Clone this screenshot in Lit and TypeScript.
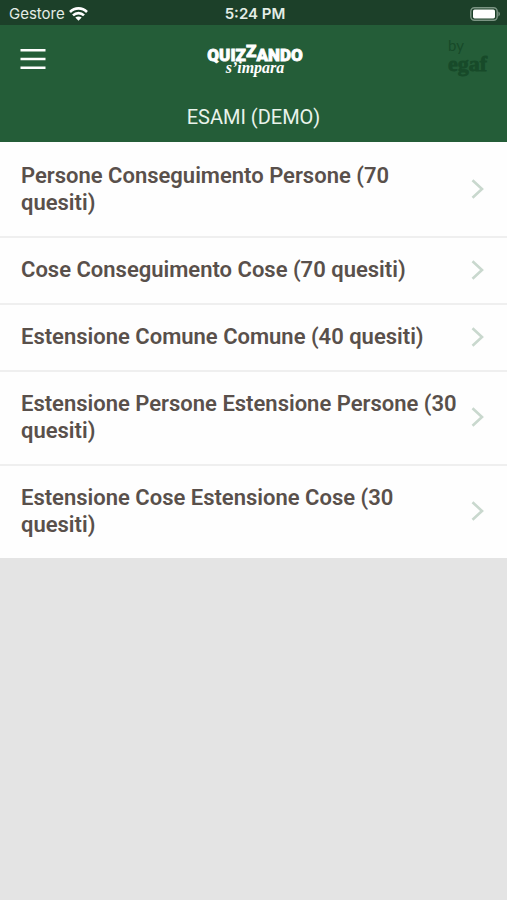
import { LitElement, html, css } from "lit";
import { customElement, property } from "lit/decorators.js";

@customElement("status-bar")
class StatusBar extends LitElement {
  static styles = css`
    :host {
      display: grid;
      grid-template-columns: 1fr auto 1fr;
      align-items: center;
      height: 25px;
      padding: 2px 6px 0 9px;
      box-sizing: border-box;
      background: #1c4029;
      color: #e4ede6;
      font: 15px/20px Inter, sans-serif;
    }
    .carrier {
      display: flex;
      align-items: center;
      gap: 4px;
    }
    .time {
      font-weight: 600;
    }
    .battery {
      justify-self: end;
    }
    svg {
      display: block;
    }
  `;

  render() {
    return html`
      <div class="carrier">
        <span>Gestore</span>
        <svg width="19" height="14" viewBox="0 0 19 14" aria-label="Wi-Fi">
          <g fill="none" stroke="#fff" stroke-width="2.6">
            <path d="M1 5C5.8 0.2 13.2 0.2 18 5" />
            <path d="M4 8.4C7.1 5.3 11.9 5.3 15 8.4" />
          </g>
          <path d="M6.3 10.6C8.1 9 10.9 9 12.7 10.6L9.5 13.8Z" fill="#fff" />
        </svg>
      </div>
      <span class="time">5:24 PM</span>
      <svg class="battery" width="31" height="14" viewBox="0 0 31 14" aria-label="Batteria">
        <rect x="0.8" y="0.8" width="26.4" height="12.4" rx="3.6" fill="none" stroke="#7c9584" stroke-width="1.4" />
        <rect x="3" y="2.6" width="22" height="8.8" rx="1.6" fill="#fff" />
        <path d="M28.4 4.6C30.4 5.4 30.4 8.6 28.4 9.4Z" fill="#7c9584" />
      </svg>
    `;
  }
}

@customElement("app-header")
class AppHeader extends LitElement {
  @property() heading = "";

  static styles = css`
    :host {
      display: block;
      background: #245d38;
      color: #fff;
      font-family: Roboto, sans-serif;
    }
    .bar {
      display: grid;
      grid-template-columns: 1fr auto 1fr;
      align-items: center;
      height: 68px;
      padding: 0 18px 0 20px;
    }
    .menu {
      justify-self: start;
      padding: 0;
      border: 0;
      background: none;
      cursor: pointer;
    }
    svg {
      display: block;
      overflow: visible;
    }
    .partner {
      justify-self: end;
    }
    .word {
      font: 900 17px Roboto, sans-serif;
    }
    .tagline {
      font: italic bold 16px "Liberation Serif", serif;
    }
    .by {
      font: 15px Lato, sans-serif;
    }
    .egaf {
      font: bold 22px "Liberation Serif", serif;
    }
    h1 {
      margin: 0;
      padding: 6px 0;
      text-align: center;
      font-size: 20px;
      font-weight: 400;
      line-height: 37px;
      color: #e9f3eb;
    }
  `;

  render() {
    return html`
      <div class="bar">
        <button class="menu" aria-label="Menu">
          <svg width="26" height="22" viewBox="0 0 26 22">
            <path d="M0.5 2.2H25.5M0.5 11H25.5M0.5 19.8H25.5" stroke="#fff" stroke-width="2.4" />
          </svg>
        </button>
        <svg width="96" height="42" viewBox="0 0 96 42" fill="#fff" aria-label="Quizzando s'impara">
          <text class="word" x="48" y="23" text-anchor="middle" stroke="#fff" stroke-width="0.8">QUIZ<tspan dy="-4">Z</tspan><tspan dy="4">ANDO</tspan></text>
          <text class="tagline" x="48" y="35" text-anchor="middle">s’impara</text>
        </svg>
        <svg class="partner" width="41" height="44" viewBox="0 0 41 44" fill="#174a29" aria-label="by egaf">
          <text class="by" x="0" y="14">by</text>
          <text class="egaf" x="0" y="34" stroke="#174a29" stroke-width="0.8">egaf</text>
        </svg>
      </div>
      <h1>${this.heading}</h1>
    `;
  }
}

@customElement("exam-list")
class ExamList extends LitElement {
  @property({ attribute: false }) items: string[] = [];

  static styles = css`
    ul {
      margin: 0;
      padding: 0;
      list-style: none;
      background: #fefefe;
    }
    li + li {
      border-top: 2px solid #efefef;
    }
    a {
      display: flex;
      align-items: center;
      gap: 8px;
      padding: 20px 23px 20px 21px;
      color: #59504b;
      font: 600 22px/27px Roboto, sans-serif;
      text-decoration: none;
    }
    li + li a {
      padding-top: 18px;
    }
    span {
      flex: 1;
    }
    svg {
      flex: none;
    }
  `;

  render() {
    return html`
      <ul>
        ${this.items.map(
          (item) => html`
            <li>
              <a href="#">
                <span>${item}</span>
                <svg width="13" height="20" viewBox="0 0 13 20" aria-hidden="true">
                  <path d="M1.5 1.2L11 10L1.5 18.8" fill="none" stroke="#c9d8ce" stroke-width="2.6" />
                </svg>
              </a>
            </li>
          `
        )}
      </ul>
    `;
  }
}

@customElement("app-root")
class AppRoot extends LitElement {
  static styles = css`
    :host {
      display: block;
      min-height: 100vh;
      background: #e4e4e4;
    }
  `;

  private exams = [
    "Persone Conseguimento Persone (70 quesiti)",
    "Cose Conseguimento Cose (70 quesiti)",
    "Estensione Comune Comune (40 quesiti)",
    "Estensione Persone Estensione Persone (30 quesiti)",
    "Estensione Cose Estensione Cose (30 quesiti)",
  ];

  render() {
    return html`
      <status-bar></status-bar>
      <app-header heading="ESAMI (DEMO)"></app-header>
      <main><exam-list .items=${this.exams}></exam-list></main>
    `;
  }
}
